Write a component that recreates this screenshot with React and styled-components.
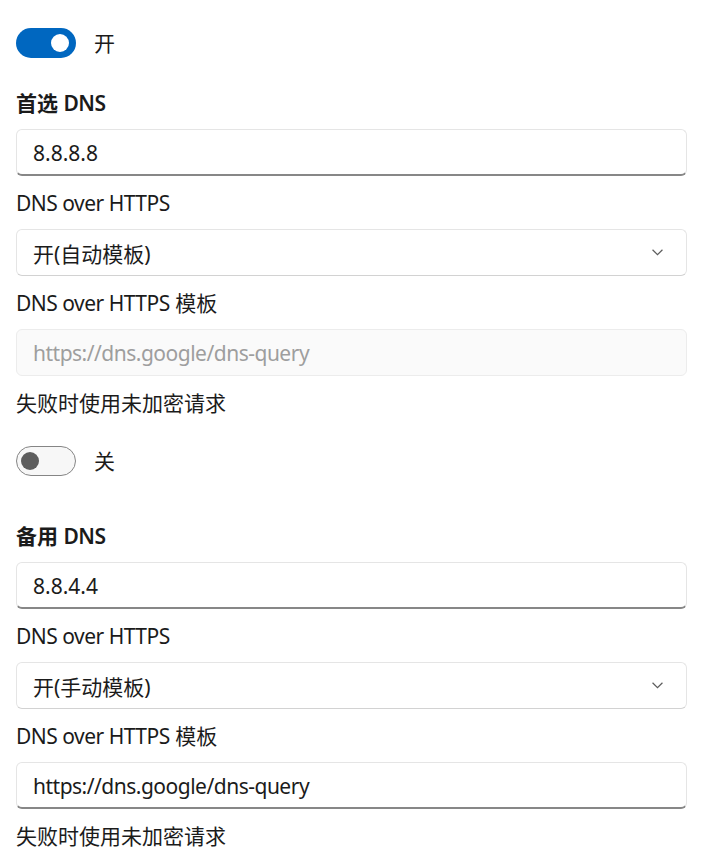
import React from "react";
import styled, { createGlobalStyle } from "styled-components";

const GlobalStyle = createGlobalStyle`
	html, body {
		margin: 0;
		background: #ffffff;
	}
	body {
		font-family: "Noto Sans", "Noto Sans CJK SC", sans-serif;
		color: #1b1b1b;
		-webkit-font-smoothing: antialiased;
	}
`;

const App = () => {
	return (
		<>
			<GlobalStyle />
			<Page>
				<ToggleRow>
					<Switch $on>
						<Knob $on />
					</Switch>
					<SwitchText>开</SwitchText>
				</ToggleRow>

				<Heading style={{ marginTop: 31 }}>
					首选 <Latin>DNS</Latin>
				</Heading>
				<TextBox>8.8.8.8</TextBox>

				<Label>
					<Latin>DNS over HTTPS</Latin>
				</Label>
				<Combo>
					<span>开(自动模板)</span>
					<Chevron />
				</Combo>

				<Label>
					<Latin>DNS over HTTPS</Latin> 模板
				</Label>
				<TextBox $disabled>
					<Latin>https://dns.google/dns-query</Latin>
				</TextBox>

				<Label>失败时使用未加密请求</Label>
				<ToggleRow style={{ marginTop: 29 }}>
					<Switch>
						<Knob />
					</Switch>
					<SwitchText>关</SwitchText>
				</ToggleRow>

				<Heading style={{ marginTop: 46 }}>
					备用 <Latin>DNS</Latin>
				</Heading>
				<TextBox>8.8.4.4</TextBox>

				<Label>
					<Latin>DNS over HTTPS</Latin>
				</Label>
				<Combo>
					<span>开(手动模板)</span>
					<Chevron />
				</Combo>

				<Label>
					<Latin>DNS over HTTPS</Latin> 模板
				</Label>
				<TextBox>
					<Latin>https://dns.google/dns-query</Latin>
				</TextBox>

				<Label>失败时使用未加密请求</Label>
			</Page>
		</>
	);
};

const Chevron = () => (
	<ChevronSvg viewBox="0 0 10 6" width="11" height="7">
		<path
			d="M0.5 0.5 L5 5 L9.5 0.5"
			fill="none"
			stroke="#5c5c5c"
			strokeWidth="1.1"
		/>
	</ChevronSvg>
);

const Page = styled.div`
	display: flex;
	flex-direction: column;
	padding: 28px 14px 0 16px;
	font-size: 21px;
`;

const Latin = styled.span`
	letter-spacing: -0.5px;
`;

const ToggleRow = styled.div`
	display: flex;
	align-items: center;
	gap: 18px;
	height: 30px;
`;

const Switch = styled.div`
	box-sizing: border-box;
	width: 60px;
	height: 30px;
	border-radius: 15px;
	display: flex;
	align-items: center;
	justify-content: ${(p) => (p.$on ? "flex-end" : "flex-start")};
	padding: 0 ${(p) => (p.$on ? "7px" : "4px")};
	background: ${(p) => (p.$on ? "#0067c0" : "#f7f7f7")};
	border: ${(p) => (p.$on ? "none" : "1.5px solid #858585")};
`;

const Knob = styled.div`
	width: 18px;
	height: 18px;
	border-radius: 50%;
	background: ${(p) => (p.$on ? "#ffffff" : "#5d5d5d")};
`;

const SwitchText = styled.span`
	line-height: 30px;
	color: #1b1b1b;
`;

const Label = styled.div`
	line-height: 28px;
	margin-top: 13px;
	color: #1b1b1b;
`;

const Heading = styled(Label)`
	font-weight: 600;
`;

const Field = styled.div`
	box-sizing: border-box;
	height: 47px;
	margin-top: 12px;
	border-radius: 6px;
	display: flex;
	align-items: center;
	padding: 0 16px;
`;

const TextBox = styled(Field)`
	background: ${(p) => (p.$disabled ? "#fafafa" : "#ffffff")};
	border: 1px solid ${(p) => (p.$disabled ? "#ececec" : "#e5e5e5")};
	border-bottom: ${(p) =>
		p.$disabled ? "1px solid #ececec" : "2px solid #878787"};
	color: ${(p) => (p.$disabled ? "#9e9e9e" : "#1b1b1b")};
	padding-top: ${(p) => (p.$disabled ? "0" : "1px")};
`;

const Combo = styled(Field)`
	justify-content: space-between;
	background: #ffffff;
	border: 1px solid #e5e5e5;
	border-bottom: 1px solid #d2d2d2;
	padding-right: 23px;
`;

const ChevronSvg = styled.svg`
	display: block;
`;

export default App;
